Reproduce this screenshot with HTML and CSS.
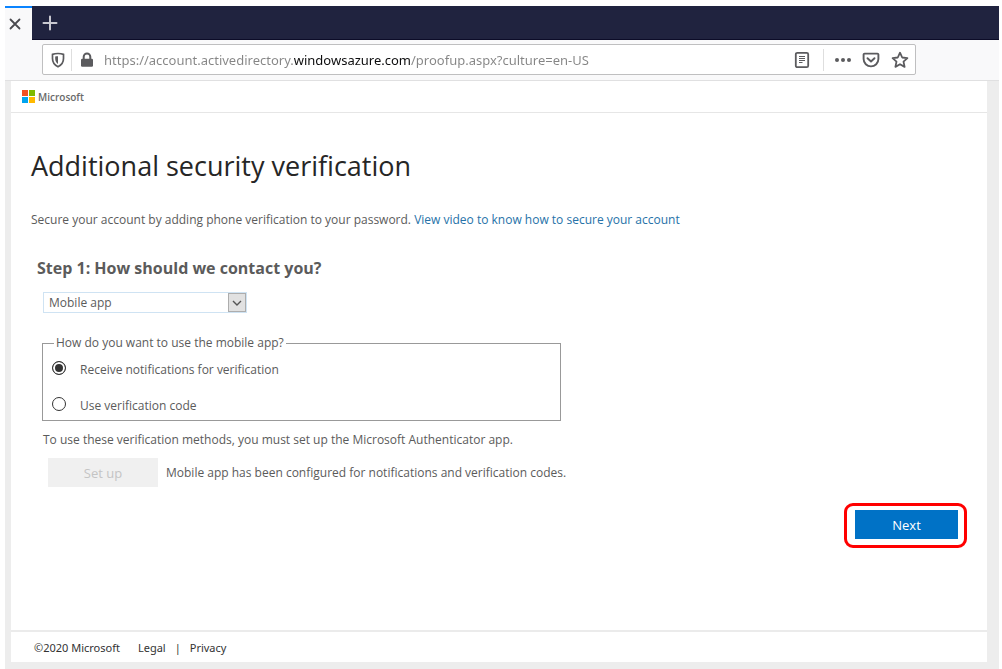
FILE: index.html
```html
<!DOCTYPE html>
<html lang="en">
<head>
    <meta charset="UTF-8">
    <meta name="viewport" content="width=device-width, initial-scale=1.0">
    <title>Additional security verification</title>
    <link rel="stylesheet" href="styles.css">
</head>
<body>

    <div class="browser">
        <div class="tab-bar">
            <div class="tab">
                <button class="icon-btn" type="button" aria-label="Close tab">
                    <svg width="12" height="12" viewBox="0 0 12 12"><path d="M1.5 1.5l9 9M10.5 1.5l-9 9" stroke="#4a4a4f" stroke-width="1.8" stroke-linecap="round"/></svg>
                </button>
            </div>
            <button class="icon-btn new-tab" type="button" aria-label="New tab">
                <svg width="16" height="16" viewBox="0 0 16 16"><path d="M8 1.5v13M1.5 8h13" stroke="#c9c9d1" stroke-width="2" stroke-linecap="round"/></svg>
            </button>
        </div>

        <div class="toolbar">
            <div class="url-bar">
                <button class="icon-btn shield" type="button" aria-label="Tracking protection">
                    <svg width="14" height="16" viewBox="0 0 14 16" fill="none"><path d="M7 1.5c-2.200 0-4.200.4-5.500.9v4.100c0 4 2 6.600 5.500 8.200 3.500-1.600 5.500-4.200 5.500-8.200V2.400C11.200 1.900 9.200 1.500 7 1.500z" stroke="#5b5b5e" stroke-width="1.700"/><path d="M7 4.200c-1 0-2 .1-2.800.4v2.200c0 2.300 1 4 2.800 5.100z" fill="#5b5b5e"/></svg>
                </button>
                <span class="divider"></span>
                <button class="icon-btn lock" type="button" aria-label="Connection secure">
                    <svg width="14" height="16" viewBox="0 0 14 16"><path d="M3.700 7.500V4.800a3.300 3.300 0 0 1 6.600 0v2.700" fill="none" stroke="#5b5b5e" stroke-width="2"/><rect x="1" y="6.800" width="12" height="8" rx="1.200" fill="#5b5b5e"/></svg>
                </button>
                <input class="url" type="text" aria-label="Address" value="https://account.activedirectory.windowsazure.com/proofup.aspx?culture=en-US">
                <button class="icon-btn reader" type="button" aria-label="Reader view">
                    <svg width="16" height="18" viewBox="0 0 16 18" fill="none" stroke="#5b5b5e"><rect x="1.800" y="1.800" width="12.400" height="14.400" rx="1.500" stroke-width="1.800"/><path d="M5 5.500h6M5 7.500h6M5 9.500h6M5 11.500h3.500" stroke-width="1"/></svg>
                </button>
                <span class="divider"></span>
                <button class="icon-btn more" type="button" aria-label="Page actions">
                    <svg width="18" height="6" viewBox="0 0 18 6" fill="#5b5b5e"><circle cx="3" cy="3" r="2"/><circle cx="9" cy="3" r="2"/><circle cx="15" cy="3" r="2"/></svg>
                </button>
                <button class="icon-btn pocket" type="button" aria-label="Save to Pocket">
                    <svg width="18" height="16" viewBox="0 0 18 16" fill="none" stroke="#5b5b5e" stroke-width="1.900" stroke-linecap="round" stroke-linejoin="round"><path d="M2.600 1.600h12.800a1 1 0 0 1 1 1v4.400a7.400 7.400 0 0 1-14.800 0V2.600a1 1 0 0 1 1-1z"/><path d="M5.500 6.200L9 9.500l3.500-3.300"/></svg>
                </button>
                <button class="icon-btn star" type="button" aria-label="Bookmark this page">
                    <svg width="18" height="18" viewBox="0 0 18 18" fill="none" stroke="#5b5b5e" stroke-width="1.800" stroke-linejoin="round"><path d="M9 1.700l2.200 4.800 5.200.6-3.900 3.500 1.100 5.300L9 13.200l-4.600 2.700 1.100-5.300L1.600 7.100l5.200-.6z"/></svg>
                </button>
            </div>
        </div>

        <div class="viewport">
            <div class="page">
                <header class="page-header">
                    <svg width="13" height="13" viewBox="0 0 13 13" aria-hidden="true"><rect width="6" height="6" fill="#f25022"/><rect x="7" width="6" height="6" fill="#7fba00"/><rect y="7" width="6" height="6" fill="#00a4ef"/><rect x="7" y="7" width="6" height="6" fill="#ffb900"/></svg>
                    <span class="brand">Microsoft</span>
                </header>

                <main class="content">
                    <h1>Additional security verification</h1>
                    <p class="intro">Secure your account by adding phone verification to your password. <a href="#">View video to know how to secure your account</a></p>

                    <form class="step">
                        <h2><label for="method">Step 1: How should we contact you?</label></h2>
                        <div class="select-box">
                            <select id="method">
                                <option>Mobile app</option>
                                <option>Authentication phone</option>
                                <option>Office phone</option>
                            </select>
                            <span class="select-arrow">
                                <svg width="10" height="6" viewBox="0 0 10 6"><path d="M1 1l4 4 4-4" fill="none" stroke="#555" stroke-width="1.400"/></svg>
                            </span>
                        </div>

                        <fieldset>
                            <legend>How do you want to use the mobile app?</legend>
                            <div class="option">
                                <input type="radio" name="usage" id="notify" checked>
                                <label for="notify">Receive notifications for verification</label>
                            </div>
                            <div class="option">
                                <input type="radio" name="usage" id="code">
                                <label for="code">Use verification code</label>
                            </div>
                        </fieldset>

                        <p class="note">To use these verification methods, you must set up the Microsoft Authenticator app.</p>
                        <div class="setup">
                            <button class="btn setup-btn" type="button" disabled>Set up</button>
                            <span>Mobile app has been configured for notifications and verification codes.</span>
                        </div>
                        <div class="actions">
                            <div class="highlight">
                                <button class="btn next-btn" type="button">Next</button>
                            </div>
                        </div>
                    </form>
                </main>

                <footer>
                    <span class="copyright">©2020 Microsoft</span>
                    <a href="#">Legal</a>
                    <span class="bar">|</span>
                    <a href="#">Privacy</a>
                </footer>
            </div>
        </div>
    </div>

</body>
</html>
```
FILE: styles.css
```css
* {
    box-sizing: border-box;
}

body {
    margin: 0;
    padding: 6px 3px 0 5px;
    background-color: #fff;
    color: #5b5b5b;
    font-family: "Open Sans", "Noto Sans", sans-serif;
    font-size: 12px;
    line-height: 16px;
}

h1, h2, p {
    margin: 0;
}

a {
    color: #2672a8;
    text-decoration: none;
}

svg {
    display: block;
}

.browser {
    display: flex;
    flex-direction: column;
    min-height: calc(100vh - 6px);
}

.icon-btn {
    display: flex;
    padding: 0;
    border: none;
    background: none;
    cursor: pointer;
}

/* tab strip */
.tab-bar {
    display: flex;
    height: 34px;
    background-color: #20233f;
    border-bottom: 1px solid #0c0c28;
}

.tab {
    display: flex;
    align-items: center;
    width: 27px;
    height: 34px;
    padding-left: 4px;
    background-color: #f9f9fa;
    border-top: 2px solid #0a84ff;
}

.new-tab {
    align-items: center;
    margin-left: 10px;
}

/* address bar */
.toolbar {
    padding: 4px 83px 5px 37px;
    background-color: #f9f9fa;
    border-bottom: 1px solid #e0e0e1;
}

.url-bar {
    display: flex;
    align-items: center;
    height: 31px;
    padding: 0 6px 0 8px;
    background-color: #fff;
    border: 1px solid #bfbfc0;
    border-radius: 2px;
}

.divider {
    width: 1px;
    height: 22px;
    background-color: #dedede;
}

.shield {
    margin-right: 6px;
}

.lock {
    margin: 0 10px 0 8px;
}

.url {
    flex: 1;
    min-width: 0;
    padding: 0;
    border: none;
    outline: none;
    font-family: "Noto Sans", "Open Sans", sans-serif;
    font-size: 13px;
    /* only the host name is drawn dark */
    background: linear-gradient(to right, #858585 190px, #0c0c0d 190px, #0c0c0d 307px, #858585 307px);
    -webkit-background-clip: text;
    background-clip: text;
    -webkit-text-fill-color: transparent;
}

.reader {
    margin-right: 13px;
}

.more {
    margin: 0 10px;
}

.pocket {
    margin-right: 11px;
}

/* page */
.viewport {
    flex: 1;
    display: flex;
    padding: 0 12px 7px 6px;
    background-color: #ededed;
}

.page {
    flex: 1;
    display: flex;
    flex-direction: column;
    background-color: #fff;
}

.page-header {
    display: flex;
    align-items: center;
    gap: 3px;
    height: 32px;
    padding-left: 11px;
    border-bottom: 1px solid #e6e6e6;
}

.brand {
    color: #6a6a6a;
    font-size: 10px;
    font-weight: 600;
}

.content {
    flex: 1;
    padding: 32px 20px 0;
}

h1 {
    color: #262626;
    font-size: 27px;
    font-weight: 400;
    line-height: 42px;
}

.intro {
    margin-top: 25px;
}

.step {
    padding: 30px 0 0 6px;
}

h2 {
    font-size: 16px;
    font-weight: 700;
    line-height: 20px;
}

.select-box {
    position: relative;
    width: 204px;
    margin: 14px 0 0 6px;
}

select {
    appearance: none;
    display: block;
    width: 100%;
    height: 21px;
    padding: 0 24px 0 5px;
    color: #5b5b5b;
    background-color: #fff;
    border: 1px solid #cfe3f3;
    border-radius: 0;
    font-family: inherit;
    font-size: 12px;
}

.select-arrow {
    position: absolute;
    top: 1px;
    right: 1px;
    display: flex;
    align-items: center;
    justify-content: center;
    width: 18px;
    height: 19px;
    background-color: #e1e1e1;
    border: 1px solid #adadad;
    pointer-events: none;
}

fieldset {
    max-width: 519px;
    margin: 22px 0 0 5px;
    padding: 10px 9px 5px;
    border: 1px solid #999;
}

legend {
    margin-left: 2px;
    padding: 0 2px;
}

.option {
    display: flex;
    align-items: center;
    gap: 14px;
}

.option + .option {
    margin-top: 18px;
}

input[type="radio"] {
    appearance: none;
    width: 14px;
    height: 14px;
    margin: 0 0 4px;
    background-color: #fff;
    border: 1px solid #333;
    border-radius: 50%;
}

input[type="radio"]:checked {
    background-color: #333;
    box-shadow: inset 0 0 0 2px #fff;
}

.note {
    margin: 11px 0 0 6px;
}

.setup {
    display: flex;
    align-items: center;
    gap: 8px;
    margin: 10px 0 0 11px;
}

.btn {
    height: 29px;
    padding: 0;
    border: none;
    font-family: inherit;
    font-size: 13px;
}

.setup-btn {
    width: 110px;
    color: #c4c4c4;
    background-color: #f0f0f0;
}

.actions {
    display: flex;
    justify-content: flex-end;
    margin-top: 16px;
}

.highlight {
    padding: 4px 6px 6px 8px;
    border: 3px solid #f00;
    border-radius: 9px;
}

.next-btn {
    display: block;
    width: 103px;
    color: #fff;
    background-color: #0072c6;
    cursor: pointer;
}

footer {
    display: flex;
    padding: 8px 23px 6px;
    border-top: 2px solid #ebebeb;
    color: #333;
    font-family: "Noto Sans", "Open Sans", sans-serif;
    font-size: 11px;
}

footer a {
    color: #333;
}

.copyright {
    margin-right: 18px;
}

.bar {
    margin: 0 9px;
}
```
